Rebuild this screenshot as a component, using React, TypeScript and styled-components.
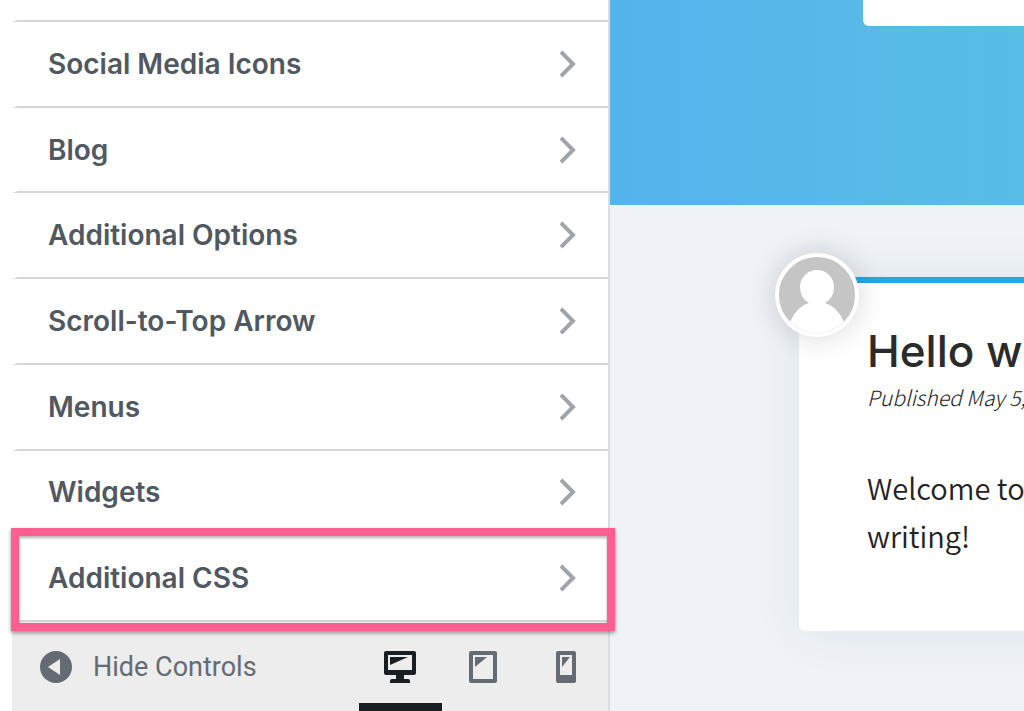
import React from "react";
import styled, { createGlobalStyle } from "styled-components";

const ui = '"Inter", "Liberation Sans", sans-serif';
const body = '"Noto Sans CJK SC", "Noto Sans", sans-serif';

const GlobalStyle = createGlobalStyle`
  *, *::before, *::after { box-sizing: border-box; }
  body { margin: 0; background: #fff; overflow: hidden; }
  button { font: inherit; color: inherit; background: none; border: 0; padding: 0; cursor: pointer; }
`;

const Layout = styled.div`
  display: grid;
  grid-template-columns: 598px minmax(0, 1fr);
  height: 100vh;
  padding-left: 12px;
`;

const Sidebar = styled.aside`
  display: flex;
  flex-direction: column;
  min-width: 0;
  border-right: 2px solid #dcdcde;
  font-family: ${ui};
`;

const Sections = styled.ul`
  flex: 1;
  display: grid;
  grid-template-rows: 22px;
  grid-auto-rows: minmax(0, 1fr);
  margin: 0;
  padding: 0;
  list-style: none;
`;

const Divider = styled.li`
  border-left: 6px solid #fff;
  border-bottom: 2px solid #d5d6d8;
`;

const Section = styled(Divider)<{ $marked?: boolean }>`
  position: relative;
  display: flex;

  ${({ $marked }) =>
    $marked &&
    `&::after {
      content: "";
      position: absolute;
      inset: -8px -7px -11px -7px;
      border: 8px solid #ff5e90;
      box-shadow: 0 2px 4px rgba(0, 0, 0, 0.4), inset 0 2px 3px rgba(0, 0, 0, 0.3);
      pointer-events: none;
    }`}
`;

const SectionButton = styled.button`
  flex: 1;
  display: flex;
  align-items: center;
  justify-content: space-between;
  && {
    padding: 0 31px 0 30px;
    color: #505862;
    font-size: 28px;
    line-height: 36px;
    font-weight: 600;
  }
`;

const Footer = styled.footer`
  display: flex;
  justify-content: space-between;
  height: 89px;
  background: #ededed;
  color: #656b72;
`;

const Collapse = styled.button`
  display: flex;
  align-items: center;
  gap: 21px;
  && {
    padding: 0 0 0 28px;
    font-family: "Roboto", "Liberation Sans", sans-serif;
    font-size: 27px;
    line-height: 36px;
  }
`;

const Devices = styled.div`
  display: flex;
`;

const Device = styled.button<{ $active?: boolean }>`
  display: flex;
  align-items: center;
  justify-content: center;
  width: 83px;
  && {
    padding: 8px 2px 0 0;
    color: ${({ $active }) => ($active ? "#191e23" : "#656b72")};
    border-bottom: 8px solid ${({ $active }) => ($active ? "#191e23" : "transparent")};
  }
`;

const Preview = styled.main`
  min-width: 0;
  overflow: hidden;
  background: #eff3f8;
  font-family: ${body};
`;

const Hero = styled.header`
  display: flex;
  height: 205px;
  padding-left: 253px;
  background: linear-gradient(90deg, #55b3eb, #58bee6);
`;

const HeroCard = styled.div`
  flex: 1;
  height: 26px;
  background: #fff;
  border-bottom-left-radius: 6px;
`;

const Post = styled.article`
  position: relative;
  min-width: 480px;
  height: 354px;
  margin: 72px 0 0 189px;
  padding: 42px 0 0 68px;
  background: #fff;
  border-top: 6px solid #22a8e3;
  border-radius: 0 0 6px 6px;
  box-shadow: 0 0 50px rgba(30, 60, 70, 0.08);
  color: #222;
  white-space: nowrap;
`;

const Avatar = styled.svg`
  position: absolute;
  top: -30px;
  left: -24px;
  width: 84px;
  height: 84px;
  border: 4px solid #fff;
  border-radius: 50%;
  background: #c5c5c5;
  box-shadow: 0 0 30px rgba(0, 0, 0, 0.16);
`;

const Title = styled.h2`
  margin: 0;
  color: #2b2b2b;
  font-family: "Inter", sans-serif;
  font-size: 44px;
  line-height: 52px;
  font-weight: 500;
`;

const Published = styled.p`
  margin: 4px 0 0;
  font-size: 21px;
  line-height: 32px;
  font-style: italic;
  font-weight: 300;
`;

const Text = styled.p`
  margin: 50px 0 0;
  font-size: 29px;
  line-height: 48px;
  font-weight: 350;
`;

const Chevron = () => (
  <svg width="18" height="28" viewBox="0 0 18 28" aria-hidden="true">
    <path d="M2 1.8 14 14 2 26.2" fill="none" stroke="#a0a5aa" strokeWidth="4" />
  </svg>
);

const CollapseIcon = () => (
  <svg width="32" height="32" viewBox="0 0 32 32" aria-hidden="true">
    <circle cx="16" cy="16" r="16" fill="currentColor" />
    <path d="M8 16 20 8V24Z" fill="#ededed" />
  </svg>
);

const Desktop = () => (
  <svg width="32" height="32" viewBox="0 0 32 32" fill="currentColor" aria-hidden="true">
    <path fillRule="evenodd" d="M2 0H30Q32 0 32 2V22Q32 24 30 24H20V28H24Q26 28 26 30V32H6V30Q6 28 8 28H12V24H2Q0 24 0 22V2Q0 0 2 0ZM4 4V19H28V4Z" />
    <path d="M6 6H24L6 14Z" />
  </svg>
);

const Tablet = () => (
  <svg width="28" height="32" viewBox="0 0 28 32" fill="currentColor" aria-hidden="true">
    <path fillRule="evenodd" d="M2 0H26Q28 0 28 2V30Q28 32 26 32H2Q0 32 0 30V2Q0 0 2 0ZM4 4V28H24V4Z" />
    <path d="M6 6H18L6 16Z" />
  </svg>
);

const Phone = () => (
  <svg width="20" height="32" viewBox="0 0 20 32" fill="currentColor" aria-hidden="true">
    <path fillRule="evenodd" d="M2 0H18Q20 0 20 2V30Q20 32 18 32H2Q0 32 0 30V2Q0 0 2 0ZM4 4V24H16V4Z" />
    <path d="M6 6H14L6 16Z" />
  </svg>
);

const sections = [
  "Social Media Icons",
  "Blog",
  "Additional Options",
  "Scroll-to-Top Arrow",
  "Menus",
  "Widgets",
  "Additional CSS",
];

export default function App() {
  return (
    <>
      <GlobalStyle />
      <Layout>
        <Sidebar>
          <Sections>
            <Divider aria-hidden="true" />
            {sections.map((name) => (
              <Section key={name} $marked={name === "Additional CSS"}>
                <SectionButton type="button">
                  {name}
                  <Chevron />
                </SectionButton>
              </Section>
            ))}
          </Sections>
          <Footer>
            <Collapse type="button">
              <CollapseIcon />
              Hide Controls
            </Collapse>
            <Devices>
              <Device type="button" $active aria-label="Desktop preview"><Desktop /></Device>
              <Device type="button" aria-label="Tablet preview"><Tablet /></Device>
              <Device type="button" aria-label="Mobile preview"><Phone /></Device>
            </Devices>
          </Footer>
        </Sidebar>
        <Preview>
          <Hero>
            <HeroCard />
          </Hero>
          <Post>
            <Avatar viewBox="0 0 76 76" aria-hidden="true">
              <path d="M11 65Q18 49 30 46Q21 41 21 30A17 17 0 0 1 55 30Q55 41 46 46Q58 49 65 65V78H11Z" fill="#fff" />
            </Avatar>
            <Title>Hello w</Title>
            <Published>Published May 5,</Published>
            <Text>
              Welcome to
              <br />
              writing!
            </Text>
          </Post>
        </Preview>
      </Layout>
    </>
  );
}
